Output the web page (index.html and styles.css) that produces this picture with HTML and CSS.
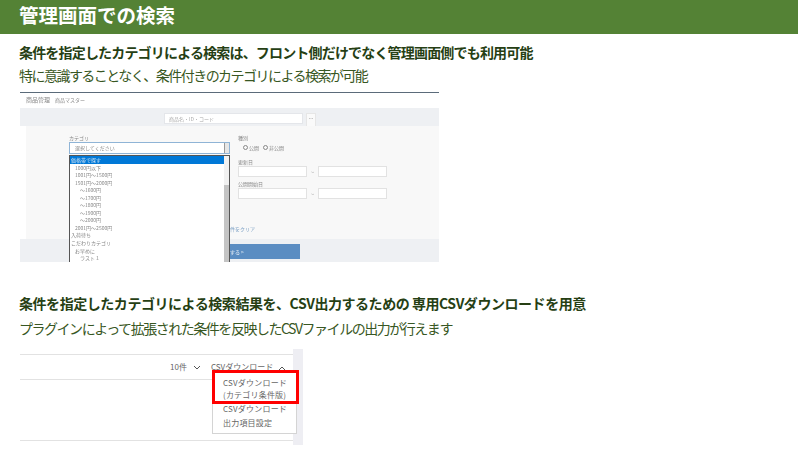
FILE: index.html
```html
<!DOCTYPE html>
<html lang="ja">
<head>
<meta charset="utf-8">
<title>管理画面での検索</title>
<link rel="stylesheet" href="styles.css">
</head>
<body>
<header class="banner"><h1>管理画面での検索</h1></header>
<main class="content">
  <h2 class="lead lead-a">条件を指定したカテゴリによる検索は、フロント側だけでなく管理画面側でも利用可能</h2>
  <p class="sub sub-a">特に意識することなく、条件付きのカテゴリによる検索が可能</p>
  <section class="shot-a">
    <div class="shot-top"><span class="t-title">商品管理</span><span class="t-small">商品マスター</span></div>
    <div class="shot-search">
      <div class="search-input">商品名・ID・コード</div>
      <div class="search-tab">…</div>
    </div>
    <div class="shot-panel">
      <div class="col-left">
        <div class="lbl">カテゴリ</div>
        <div class="select"><span>選択してください</span><span class="select-arrow"></span></div>
      </div>
      <div class="col-right">
        <div class="lbl">種別</div>
        <div class="radios"><i class="radio"></i><span>公開</span><i class="radio"></i><span>非公開</span></div>
        <div class="lbl lbl-gap">更新日</div>
        <div class="range"><div class="field"></div><span>~</span><div class="field"></div></div>
        <div class="lbl lbl-gap2">公開開始日</div>
        <div class="range"><div class="field"></div><span>~</span><div class="field"></div></div>
        <div class="clear">件をクリア</div>
      </div>
    </div>
    <div class="shot-foot"><div class="search-btn">する &gt;</div></div>
    <div class="dropdown">
      <div class="opts">
        <div class="opt sel">価格帯で探す</div>
        <div class="opt l1">1000円以下</div>
        <div class="opt l1">1001円～1500円</div>
        <div class="opt l1">1501円～2000円</div>
        <div class="opt l2">～1600円</div>
        <div class="opt l2">～1700円</div>
        <div class="opt l2">～1800円</div>
        <div class="opt l2">～1900円</div>
        <div class="opt l2">～2000円</div>
        <div class="opt l1">2001円～2500円</div>
        <div class="opt">入荷待ち</div>
        <div class="opt">こだわりカテゴリ</div>
        <div class="opt l1">お早めに</div>
        <div class="opt l2">ラスト１</div>
      </div>
      <div class="scroll"><div class="thumb"></div></div>
    </div>
  </section>
  <h2 class="lead lead-b">条件を指定したカテゴリによる検索結果を、CSV出力するための 専用CSVダウンロードを用意</h2>
  <p class="sub sub-b">プラグインによって拡張された条件を反映したCSVファイルの出力が行えます</p>
  <section class="shot-b">
    <div class="b-main">
      <div class="b-bar">
        <span class="b-count">10件</span>
        <svg class="chev" width="8" height="5" viewBox="0 0 8 5"><path d="M1 1l3 3 3-3" fill="none" stroke="#555" stroke-width="1"/></svg>
        <span class="b-csv">CSVダウンロード</span>
        <svg class="chev-up" width="8" height="5" viewBox="0 0 8 5"><path d="M1 4l3-3 3 3" fill="none" stroke="#555" stroke-width="1"/></svg>
      </div>
      <div class="b-body"></div>
    </div>
    <div class="b-strip"></div>
    <div class="menu">
      <div class="menu-item menu-two">CSVダウンロード<br>(カテゴリ条件版)</div>
      <div class="menu-item">CSVダウンロード</div>
      <div class="menu-item">出力項目設定</div>
    </div>
    <div class="redbox"></div>
  </section>
</main>
</body>
</html>
```
FILE: styles.css
```css
* { box-sizing: border-box; }
html, body { margin: 0; padding: 0; }
body {
  width: 798px;
  height: 449px;
  overflow: hidden;
  background: #fff;
  font-family: "Noto Sans CJK JP", "Noto Sans", sans-serif;
}
.banner {
  height: 34px;
  background: #548235;
  padding: 0 0 0 19px;
  display: flex;
  align-items: flex-start;
}
.banner h1 {
  margin: 0;
  font-size: 19.5px;
  line-height: 30px;
  font-weight: 700;
  color: #fff;
}
.content { padding-left: 20px; }
.lead {
  margin: 0;
  font-size: 14px;
  line-height: 20px;
  font-weight: 700;
  color: #263f14;
  white-space: nowrap;
}
.lead-a { padding-top: 8px; letter-spacing: -0.82px; height: 28px; margin-left: -1px; }
.lead-b { margin-top: 31px; letter-spacing: -0.45px; margin-left: -1px; }
.sub {
  margin: 0;
  font-size: 14px;
  line-height: 20px;
  font-weight: 400;
  color: #385723;
  white-space: nowrap;
  margin-left: -1px;
}
.sub-a { height: 30px; padding-top: 3px; letter-spacing: -1.53px; }
.sub-b { margin-top: 5px; letter-spacing: -1.47px; }

.shot-a {
  position: relative;
  width: 419px;
  height: 170px;
  border-top: 1px solid #5b6b7a;
  color: #888;
  font-size: 5px;
  line-height: 7px;
  overflow: hidden;
  filter: blur(0.3px);
}
.shot-top {
  height: 15px;
  padding: 0 0 2px 6px;
  display: flex;
  gap: 5px;
  align-items: center;
  background: #fff;
}
.t-title { font-size: 6px; }
.shot-search {
  height: 18px;
  background: #eef0f3;
  padding: 5px 0 0 144px;
  display: flex;
  gap: 3px;
}
.search-input {
  width: 139px;
  height: 11px;
  background: #fff;
  border: 1px solid #e4e6ea;
  padding: 1px 0 0 4px;
  color: #aaa;
}
.search-tab {
  width: 10px;
  height: 13px;
  background: #fafafa;
  border: 1px solid #e6e6e6;
  border-bottom: 0;
  text-align: center;
}
.shot-panel {
  margin-left: 6px;
  width: 413px;
  height: 113px;
  background: #f8f8f8;
  padding: 8px 0 0 43px;
  display: flex;
}
.col-left { width: 169px; }
.select {
  width: 161px;
  height: 12px;
  border: 1px solid #8fb4d6;
  background: #fff;
  margin-top: 1px;
  padding: 1px 0 0 5px;
  display: flex;
  justify-content: space-between;
}
.select-arrow { width: 5px; background: #e6e6e6; margin: -1px 0 0; border-left: 1px solid #999; }
.col-right { width: 160px; }
.lbl { height: 7px; }
.lbl-gap { margin-top: 6px; }
.lbl-gap2 { margin-top: 3px; }
.radios {
  display: flex;
  align-items: center;
  gap: 1px;
  height: 10px;
  margin-top: 1px;
  padding-left: 2px;
}
.radio {
  width: 5px;
  height: 5px;
  border: 1px solid #888;
  border-radius: 50%;
  margin-left: 3px;
}
.range {
  display: flex;
  align-items: center;
  gap: 4px;
  padding-top: 1px;
}
.field {
  width: 69px;
  height: 11px;
  background: #fff;
  border: 1px solid #e2e2e2;
}
.clear {
  margin: 26px 0 0 -8px;
  color: #7a9fc4;
}
.shot-foot {
  height: 23px;
  background: #eef0f3;
  padding: 5px 0 0 180px;
}
.search-btn {
  width: 100px;
  height: 15px;
  background: #5b8dc2;
  color: #fff;
  padding: 4px 0 0 30px;
}
.dropdown {
  position: absolute;
  left: 49px;
  top: 62px;
  width: 161px;
  height: 110px;
  background: #fff;
  border: 1px solid #555;
  border-bottom: 0;
  display: flex;
}
.opts { flex: 1; }
.opt { height: 7.55px; line-height: 7.5px; padding-left: 1px; white-space: nowrap; color: #888; }
.opt.sel { background: #0078d7; color: #dce9f5; }
.l1 { padding-left: 5px; }
.l2 { padding-left: 10px; }
.scroll { width: 5px; background: #f1f1f1; padding-top: 29px; }
.thumb { height: 100%; background: #c4c4c4; }

.shot-b {
  position: relative;
  width: 283px;
  height: 96px;
  margin-top: 11px;
  display: flex;
  color: #666;
  font-size: 8px;
}
.b-main { width: 273px; padding-top: 5px; }
.b-bar {
  height: 26px;
  border-top: 1px solid #e2e2e2;
  border-bottom: 1px solid #e2e2e2;
  display: flex;
  align-items: center;
  padding-left: 150px;
  line-height: 22px;
}
.chev { margin: 1px 0 0 6px; }
.b-csv { margin-left: 10px; }
.chev-up { margin: 3px 0 0 5px; }
.b-body { height: 61px; border-bottom: 1px solid #e2e2e2; }
.b-strip { width: 10px; background: #eeeef3; }
.menu {
  position: absolute;
  left: 192px;
  top: 21px;
  width: 85px;
  height: 64px;
  background: #fff;
  border: 1px solid #d4d4d4;
  padding-top: 6px;
}
.menu-item { padding-left: 10px; line-height: 12px; height: 14px; letter-spacing: 0.2px; white-space: nowrap; }
.menu-two { height: 26px; }
.redbox {
  position: absolute;
  left: 192px;
  top: 21px;
  width: 87px;
  height: 34px;
  border: 3px solid #f00;
}
```
